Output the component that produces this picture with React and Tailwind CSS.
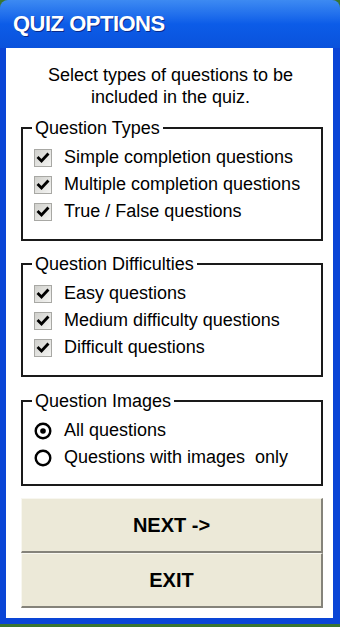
const font = { fontFamily: '"Liberation Sans", Arial, sans-serif' };

function CheckBox() {
  return (
    <span className="w-[18px] h-[18px] shrink-0 border border-[#a8a8a4] bg-gradient-to-br from-[#d0d0cc] to-[#f4f4f2] flex items-center justify-center">
      <svg width="14" height="14" viewBox="0 0 14 14">
        <polyline points="2.5,7 5.5,10 11.5,3.5" fill="none" stroke="#000" strokeWidth="2.8" strokeLinecap="square" />
      </svg>
    </span>
  );
}

function Radio({ checked }) {
  return (
    <svg width="18" height="18" viewBox="0 0 18 18" className="shrink-0">
      <circle cx="9" cy="9" r="7.3" fill="#fff" stroke="#000" strokeWidth="2.4" />
      {checked && <circle cx="9" cy="9" r="2.8" fill="#000" />}
    </svg>
  );
}

function Group({ title, children, pb = "pb-[14px]" }) {
  return (
    <fieldset className={`border-2 border-[#1a1a1a] pl-[11px] pr-3 pt-[6px] ${pb}`}>
      <legend className="px-[3px] -ml-[2px] text-[18px] leading-[20px] text-black">{title}</legend>
      {children}
    </fieldset>
  );
}

function Row({ control, label }) {
  return (
    <div className="flex items-center h-[27px] gap-[12px] text-[18px] text-black">
      {control}
      <span className="whitespace-pre">{label}</span>
    </div>
  );
}

export default function App() {
  const types = ["Simple completion questions", "Multiple completion questions", "True / False questions"];
  const diffs = ["Easy questions", "Medium difficulty questions", "Difficult questions"];

  return (
    <div className="w-[340px] h-[627px] bg-[#3a7530] flex flex-col" style={font}>
      <div className="h-[48px] shrink-0 rounded-t-[8px] bg-gradient-to-b from-[#3d8af2] via-[#0c5ce8] to-[#0a52dc] flex items-center pl-[13px] pb-[2px]">
        <span className="text-white font-bold text-[22px] tracking-[-0.5px] [text-shadow:1px_1px_0_#0a2a8a]">
          QUIZ OPTIONS
        </span>
      </div>
      <div className="h-[576px] shrink-0 border-l-[6px] border-r-[7px] border-b-[6px] border-[#0a45d6] bg-white flex flex-col pt-4 pb-[10px] pl-[15px] pr-[10px]">
        <p className="text-center text-[18px] leading-[22px] text-black pr-[3px]">
          Select types of questions to be
          <br />
          included in the quiz.
        </p>
        <div className="mt-[10px]">
          <Group title="Question Types">
            {types.map((t) => (
              <Row key={t} control={<CheckBox />} label={t} />
            ))}
          </Group>
        </div>
        <div className="mt-[13px]">
          <Group title="Question Difficulties">
            {diffs.map((t) => (
              <Row key={t} control={<CheckBox />} label={t} />
            ))}
          </Group>
        </div>
        <div className="mt-[14px]">
          <Group title="Question Images" pb="pb-[13px]">
            <Row control={<Radio checked />} label="All questions" />
            <Row control={<Radio />} label="Questions with images  only" />
          </Group>
        </div>
        <div className="mt-3 flex flex-col">
          <button className="h-[55px] bg-[#ece9d8] border-t border-l border-[#f8f7f0] border-b-2 border-r-2 border-b-[#85837a] border-r-[#85837a] text-[20px] font-bold text-black">
            NEXT -&gt;
          </button>
          <button className="h-[55px] bg-[#ece9d8] border-t border-l border-[#f8f7f0] border-b-2 border-r-2 border-b-[#85837a] border-r-[#85837a] text-[20px] font-bold text-black">
            EXIT
          </button>
        </div>
      </div>
    </div>
  );
}
